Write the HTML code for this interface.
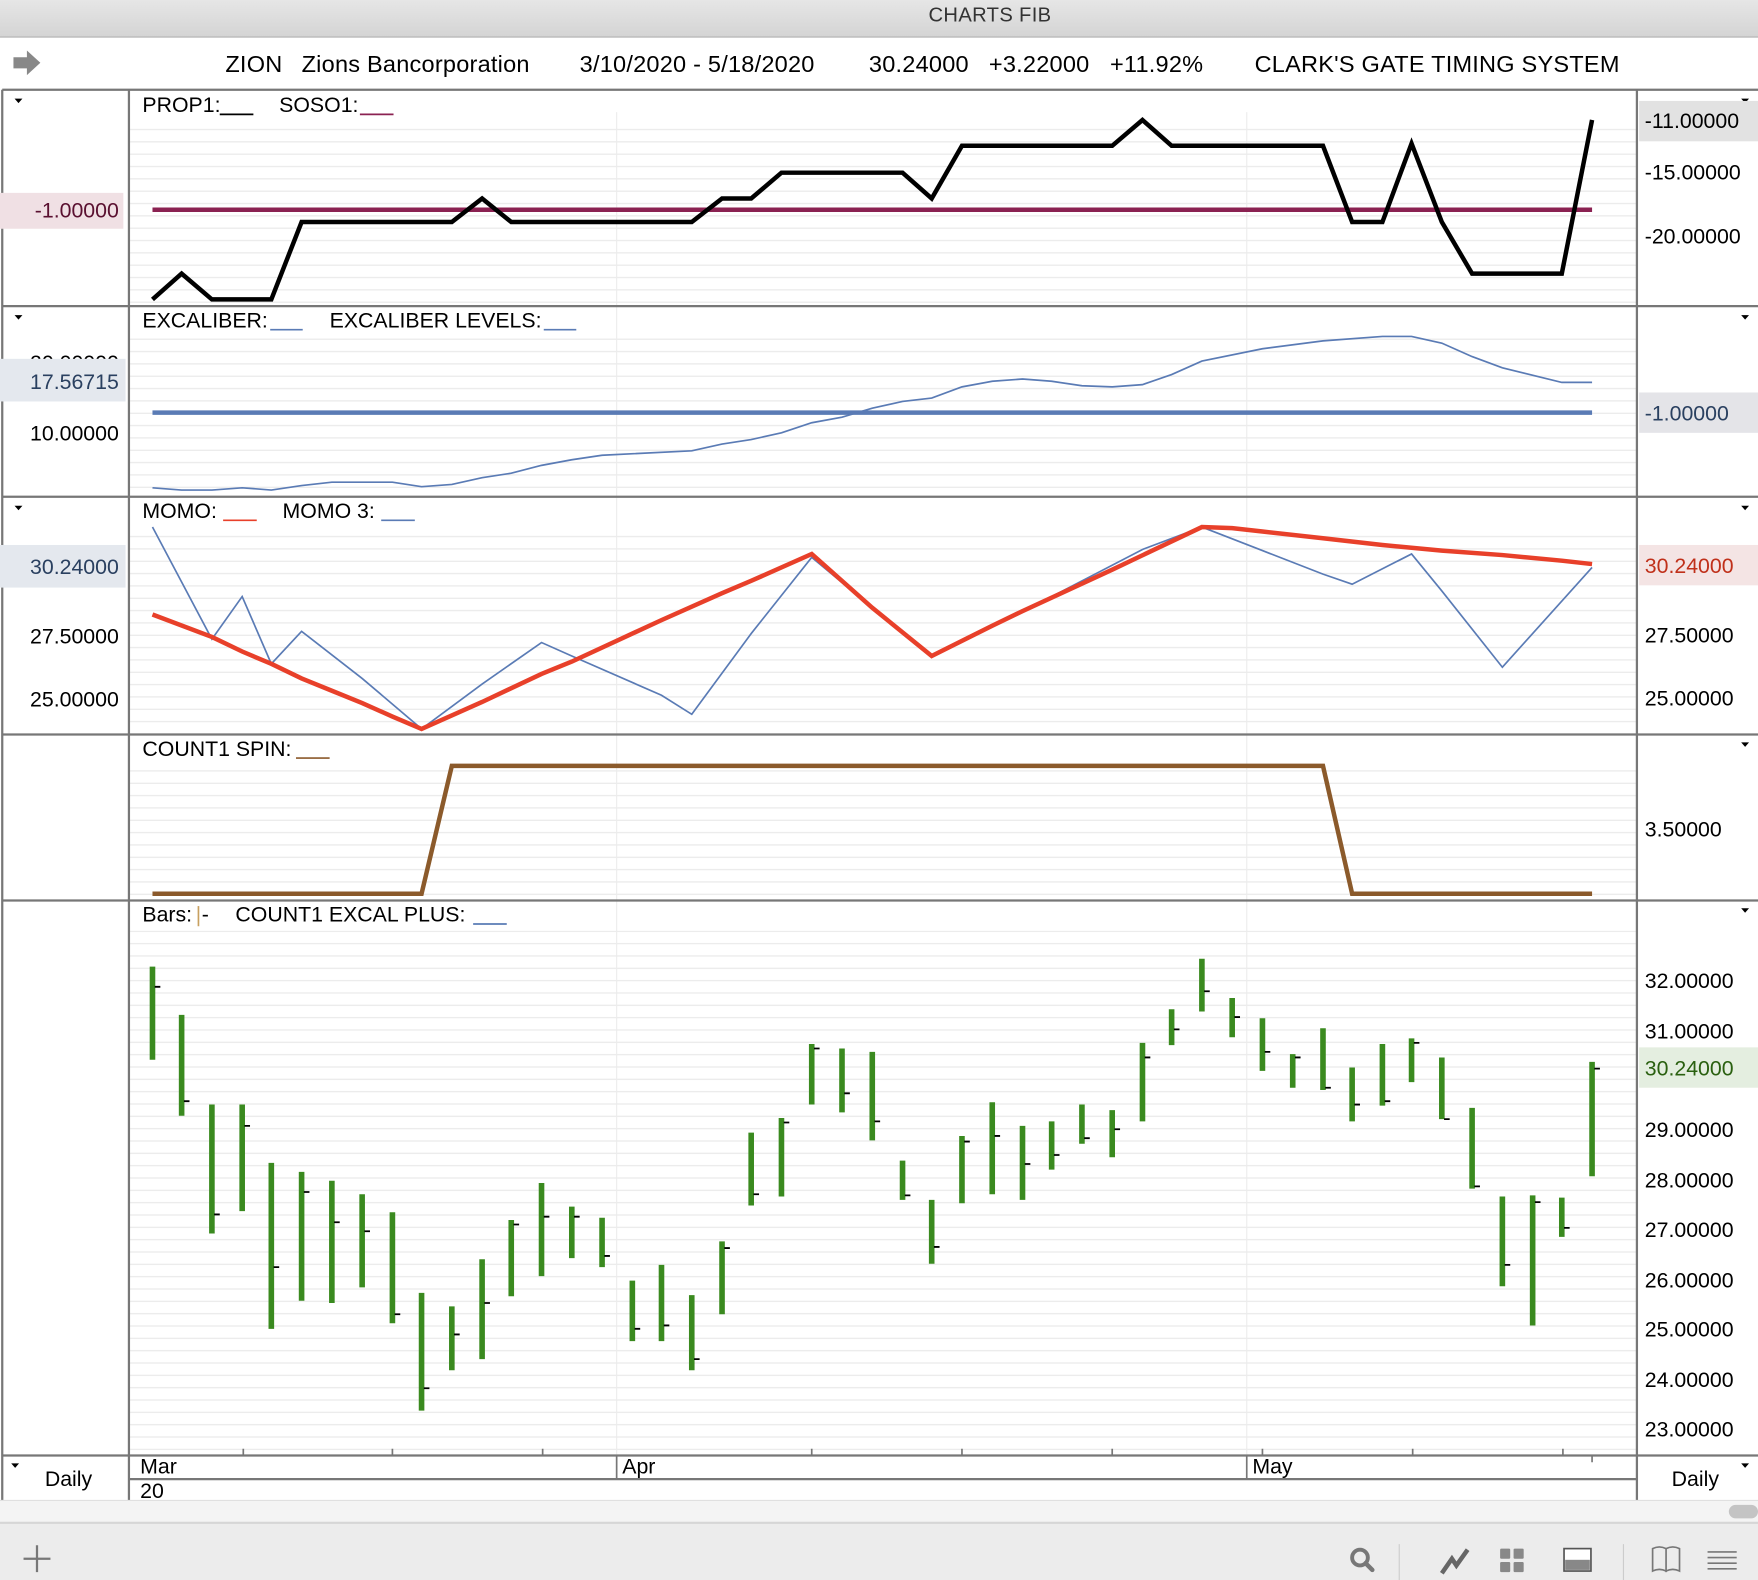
<!DOCTYPE html>
<html><head><meta charset="utf-8"><style>
html,body{margin:0;padding:0;background:#fff;}
svg{display:block;font-family:"Liberation Sans",Arial,sans-serif;}
</style></head><body>
<svg width="1758" height="1580" viewBox="0 0 1568 1409" preserveAspectRatio="none" xmlns="http://www.w3.org/2000/svg">
<defs>
<pattern id="g" x="0" y="0" width="10" height="11" patternUnits="userSpaceOnUse"><rect x="0" y="5" width="10" height="1" fill="#e8e8e8"/></pattern>
<linearGradient id="tb" x1="0" y1="0" x2="0" y2="1"><stop offset="0" stop-color="#e6e6e6"/><stop offset="1" stop-color="#d4d4d4"/></linearGradient>
</defs>
<rect x="0" y="0" width="1568" height="33" fill="url(#tb)"/>
<line x1="0" y1="33" x2="1568" y2="33" fill="none" stroke="#b0b0b0"/>
<text x="883" y="19" font-size="18" text-anchor="middle" fill="#333" letter-spacing="0.3">CHARTS FIB</text>
<path d="M12 51h12v-6l12 11l-12 11v-6h-12z" fill="#888"/>
<g font-size="21" fill="#000" letter-spacing="0.2">
<text x="201" y="64">ZION</text><text x="269" y="64">Zions Bancorporation</text>
<text x="517" y="64">3/10/2020 - 5/18/2020</text><text x="775" y="64">30.24000</text>
<text x="882" y="64">+3.22000</text><text x="990" y="64">+11.92%</text>
<text x="1119" y="64">CLARK'S GATE TIMING SYSTEM</text></g>
<line x1="2" y1="80" x2="1568" y2="80" stroke="#777" stroke-width="2"/>
<rect x="116" y="110" width="1344" height="162" fill="url(#g)"/>
<rect x="116" y="300" width="1344" height="142" fill="url(#g)"/>
<rect x="116" y="470" width="1344" height="184" fill="url(#g)"/>
<rect x="116" y="682" width="1344" height="120" fill="url(#g)"/>
<rect x="116" y="830" width="1344" height="467" fill="url(#g)"/>
<line x1="550" y1="100" x2="550" y2="1297" stroke="#ececec"/>
<line x1="1112" y1="100" x2="1112" y2="1297" stroke="#ececec"/>
<g stroke="#777" stroke-width="2" fill="none">
<line x1="2" y1="80" x2="2" y2="1338"/>
<line x1="115" y1="80" x2="115" y2="1338"/>
<line x1="1460" y1="80" x2="1460" y2="1338"/>
<line x1="2" y1="273" x2="1568" y2="273"/>
<line x1="2" y1="443" x2="1568" y2="443"/>
<line x1="2" y1="655" x2="1568" y2="655"/>
<line x1="2" y1="803" x2="1568" y2="803"/>
<line x1="2" y1="1298" x2="1568" y2="1298"/>
<line x1="115" y1="1319" x2="1460" y2="1319"/>
</g>
<g fill="#000"><path d="M13 88h7l-3.5 4z"/><path d="M13 281h7l-3.5 4z"/><path d="M13 451h7l-3.5 4z"/><path d="M10 1305h7l-3.5 4z"/>
<path d="M1553 88h7l-3.5 4z"/><path d="M1553 281h7l-3.5 4z"/><path d="M1553 451h7l-3.5 4z"/><path d="M1553 662h7l-3.5 4z"/><path d="M1553 810h7l-3.5 4z"/><path d="M1553 1305h7l-3.5 4z"/></g>
<g font-size="19" fill="#000">
<text x="127" y="100">PROP1:</text><text x="249" y="100">SOSO1:</text>
<text x="127" y="292">EXCALIBER:</text><text x="294" y="292">EXCALIBER LEVELS:</text>
<text x="127" y="462">MOMO:</text><text x="252" y="462">MOMO 3:</text>
<text x="127" y="674">COUNT1 SPIN:</text>
<text x="127" y="822">Bars:</text><text x="180" y="822">-</text><text x="210" y="822">COUNT1 EXCAL PLUS:</text></g>
<g stroke-width="1.5"><line x1="196" y1="102" x2="226" y2="102" stroke="#000"/><line x1="321" y1="102" x2="351" y2="102" stroke="#8b2252"/>
<line x1="241" y1="294" x2="270" y2="294" stroke="#5a7bb5"/><line x1="485" y1="294" x2="514" y2="294" stroke="#5a7bb5"/>
<line x1="199" y1="464" x2="229" y2="464" stroke="#e8402a"/><line x1="340" y1="464" x2="370" y2="464" stroke="#5a7bb5"/>
<line x1="264" y1="676" x2="294" y2="676" stroke="#8b5a2b"/><line x1="422" y1="824" x2="452" y2="824" stroke="#5a7bb5"/>
<line x1="177" y1="808" x2="177" y2="826" stroke="#c8a060"/></g>
<line x1="136" y1="187" x2="1420" y2="187" stroke="#8b2252" stroke-width="4"/>
<polyline fill="none" stroke="#000" stroke-width="4" points="136,267 162,244 189,267 242,267 269,198 403,198 430,177 456,198 617,198 644,177 670,177 697,154 805,154 831,177 858,130 992,130 1019,107 1045,130 1180,130 1206,198 1233,198 1259,128 1286,198 1313,244 1393,244 1420,107"/>
<rect x="0" y="172" width="110" height="32" fill="#f0e0e4"/>
<text x="106" y="194" font-size="19" text-anchor="end" fill="#5a1030">-1.00000</text>
<rect x="1462" y="90" width="106" height="36" fill="#e2e2e2"/>
<g font-size="19" fill="#000"><text x="1467" y="114">-11.00000</text><text x="1467" y="160">-15.00000</text><text x="1467" y="217">-20.00000</text></g>
<line x1="136" y1="368" x2="1420" y2="368" stroke="#5a7bb5" stroke-width="4"/>
<polyline fill="none" stroke="#5a7bb5" stroke-width="1.5" points="136,435 162,437 189,437 216,435 242,437 269,433 296,430 350,430 376,434 403,432 430,426 456,422 483,415 510,410 537,406 617,402 644,396 670,392 697,386 724,377 751,372 778,364 805,358 831,355 858,345 885,340 912,338 938,340 965,344 992,345 1019,343 1045,334 1072,322 1126,311 1180,304 1233,300 1259,300 1286,306 1313,318 1340,328 1393,341 1420,341"/>
<text x="106" y="330" font-size="19" text-anchor="end" fill="#000">20.00000</text>
<rect x="0" y="320" width="112" height="38" fill="#e4e8ee"/>
<text x="106" y="347" font-size="19" text-anchor="end" fill="#2a4060">17.56715</text>
<text x="106" y="393" font-size="19" text-anchor="end" fill="#000">10.00000</text>
<rect x="1462" y="350" width="106" height="36" fill="#e4e4e8"/>
<text x="1467" y="375" font-size="19" fill="#2a4060">-1.00000</text>
<polyline fill="none" stroke="#5a7bb5" stroke-width="1.5" points="136,470 189,570 216,532 242,592 269,563 323,605 376,650 430,610 483,573 510,585 590,620 617,637 670,565 724,497 778,542 831,585 885,558 938,532 1019,490 1072,470 1126,491 1180,512 1206,521 1259,494 1286,527 1340,595 1420,506"/>
<polyline fill="none" stroke="#e8402a" stroke-width="4" points="136,548 189,568 216,581 242,592 269,605 296,616 323,627 350,639 376,650 430,626 483,601 510,590 564,565 590,553 644,529 670,518 724,494 778,542 831,585 885,558 912,545 992,508 1072,470 1099,471 1126,474 1180,480 1233,486 1286,491 1340,495 1393,500 1420,503"/>
<rect x="0" y="486" width="112" height="38" fill="#e4e8ee"/>
<text x="106" y="512" font-size="19" text-anchor="end" fill="#2a4060">30.24000</text>
<g font-size="19" fill="#000"><text x="106" y="574" text-anchor="end">27.50000</text><text x="106" y="630" text-anchor="end">25.00000</text>
<text x="1467" y="573">27.50000</text><text x="1467" y="629">25.00000</text></g>
<rect x="1462" y="486" width="106" height="36" fill="#f4e4e4"/>
<text x="1467" y="511" font-size="19" fill="#c0301a">30.24000</text>
<polyline fill="none" stroke="#8b5a2b" stroke-width="4" points="136,797 376,797 403,683 1180,683 1206,797 1420,797"/>
<text x="1467" y="746" font-size="19" fill="#000">3.50000</text>
<g font-size="19" fill="#000">
<text x="1467" y="881">32.00000</text><text x="1467" y="926">31.00000</text><text x="1467" y="1014">29.00000</text>
<text x="1467" y="1059">28.00000</text><text x="1467" y="1103">27.00000</text><text x="1467" y="1148">26.00000</text>
<text x="1467" y="1192">25.00000</text><text x="1467" y="1237">24.00000</text><text x="1467" y="1281">23.00000</text></g>
<rect x="1462" y="934" width="106" height="36" fill="#e4eee0"/>
<text x="1467" y="959" font-size="19" fill="#2a6010">30.24000</text>
<g stroke="#3a8a1f" stroke-width="5">
<path d="M136 862V945M162 905V995M189 985V1100M216 985V1080M242 1037V1185M269 1045V1160M296 1053V1162M323 1065V1148M350 1081V1180M376 1153V1258M403 1165V1222M430 1123V1212M456 1088V1156M483 1055V1138M510 1076V1122M537 1086V1130M564 1142V1196M590 1128V1196M617 1155V1222M644 1107V1172M670 1010V1075M697 997V1067M724 931V985M751 935V992M778 938V1017M805 1035V1070M831 1070V1127M858 1013V1073M885 983V1065M912 1004V1070M938 1000V1043M965 985V1020M992 990V1032M1019 930V1000M1045 900V932M1072 855V902M1099 890V925M1126 908V955M1153 940V970M1180 917V972M1206 952V1000M1233 931V986M1259 926V965M1286 943V998M1313 988V1060M1340 1067V1147M1367 1066V1182M1393 1068V1103M1420 947V1049"/></g>
<g stroke="#000" stroke-width="1.6">
<path d="M138 880h5M164 982h5M191 1083h5M218 1004h5M244 1130h5M271 1063h5M298 1090h5M325 1098h5M352 1172h5M378 1238h5M405 1190h5M432 1162h5M458 1092h5M485 1085h5M512 1085h5M539 1120h5M566 1185h5M592 1182h5M619 1212h5M646 1113h5M672 1065h5M699 1001h5M726 935h5M753 975h5M780 1000h5M807 1066h5M833 1112h5M860 1018h5M887 1013h5M914 1038h5M940 1030h5M967 1015h5M994 1007h5M1021 943h5M1047 918h5M1074 884h5M1101 907h5M1128 938h5M1155 943h5M1182 970h5M1208 985h5M1235 982h5M1261 930h5M1288 998h5M1315 1058h5M1342 1128h5M1369 1072h5M1395 1095h5M1422 953h5"/></g>
<g stroke="#777" stroke-width="1.5">
<path d="M217 1292v6M350 1292v6M484 1292v6M724 1292v6M858 1292v6M992 1292v6M1126 1292v6M1260 1292v6M1394 1292v6M1420 1298v6M550 1298v21M1112 1298v21"/></g>
<g font-size="19" fill="#000"><text x="125" y="1314">Mar</text><text x="125" y="1336">20</text><text x="555" y="1314">Apr</text><text x="1117" y="1314">May</text>
<text x="40" y="1325">Daily</text><text x="1491" y="1325">Daily</text></g>
<rect x="0" y="1338" width="1568" height="20" fill="#f4f4f4"/>
<line x1="0" y1="1338" x2="1568" y2="1338" stroke="#e0e0e0"/>
<rect x="1542" y="1342" width="26" height="12" rx="6" fill="#c4c4c4"/>
<rect x="0" y="1358" width="1568" height="51" fill="#ececec"/>
<line x1="0" y1="1358" x2="1568" y2="1358" stroke="#d6d6d6" stroke-width="2"/>
<path d="M33 1378v24M21 1390h24" stroke="#777" stroke-width="2"/>
<circle cx="1213" cy="1389" r="7" fill="none" stroke="#777" stroke-width="3.5"/><path d="M1218 1394l6 6" stroke="#777" stroke-width="4" stroke-linecap="round"/>
<line x1="1248" y1="1377" x2="1248" y2="1409" stroke="#ccc"/><line x1="1448" y1="1377" x2="1448" y2="1409" stroke="#ccc"/>
<path d="M1286 1403L1295 1390L1299 1396L1309 1382" fill="none" stroke="#666" stroke-width="4" stroke-linejoin="miter"/>
<g fill="#888"><rect x="1338" y="1381" width="9" height="9" rx="1"/><rect x="1350" y="1381" width="9" height="9" rx="1"/><rect x="1338" y="1393" width="9" height="9" rx="1"/><rect x="1350" y="1393" width="9" height="9" rx="1"/></g>
<rect x="1395" y="1381" width="24" height="20" fill="#fff" stroke="#555" stroke-width="1.5"/><rect x="1396" y="1391" width="22" height="9" fill="#888"/>
<path d="M1474 1381q6-3 12 0v20q-6-3-12 0zM1486 1381q6-3 12 0v20q-6-3-12 0z" fill="none" stroke="#777" stroke-width="1.5"/>
<path d="M1523 1384h26M1523 1389h26M1523 1394h26M1523 1399h26" stroke="#777" stroke-width="1.5"/>
</svg>
</body></html>
